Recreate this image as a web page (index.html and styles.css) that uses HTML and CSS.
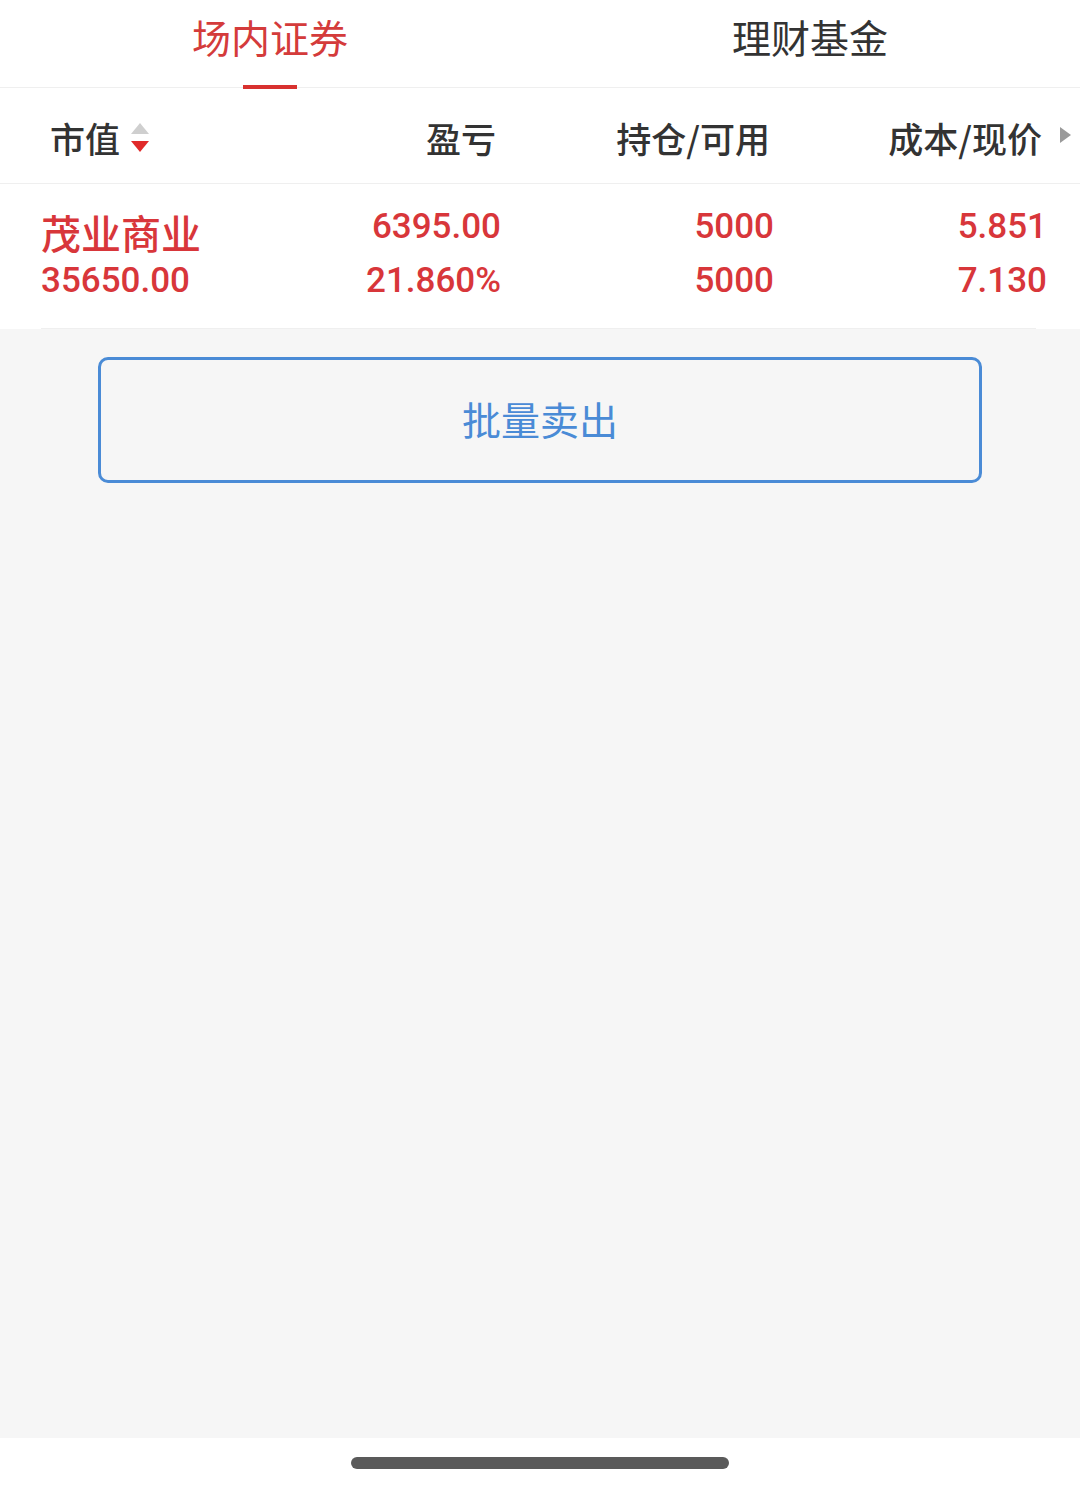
FILE: index.html
```html
<!DOCTYPE html>
<html lang="zh-CN">
<head>
<meta charset="utf-8">
<title>持仓</title>
<link rel="stylesheet" href="styles.css">
</head>
<body>
<div class="page">
  <div class="tabs">
    <div class="tab active"><span class="tab-label">场内证券</span><span class="tab-bar"></span></div>
    <div class="tab"><span class="tab-label">理财基金</span><span class="tab-bar"></span></div>
  </div>

  <div class="grid head">
    <div class="cell c1"><span>市值</span>
      <span class="sort"><span class="tri-up"></span><span class="tri-down"></span></span>
    </div>
    <div class="cell c2">盈亏</div>
    <div class="cell c3">持仓/可用</div>
    <div class="cell c4"><span>成本/现价</span><span class="tri-right"></span></div>
  </div>

  <div class="grid row">
    <div class="cell c1">
      <div class="name">茂业商业</div>
      <div class="num1">35650.00</div>
    </div>
    <div class="cell c2">
      <div class="num">6395.00</div>
      <div class="num">21.860%</div>
    </div>
    <div class="cell c3">
      <div class="num">5000</div>
      <div class="num">5000</div>
    </div>
    <div class="cell c4">
      <div class="num">5.851</div>
      <div class="num">7.130</div>
    </div>
  </div>

  <div class="main">
    <div class="btn">批量卖出</div>
  </div>

  <div class="home"><span class="home-bar"></span></div>
</div>
</body>
</html>
```

FILE: styles.css
```css
html, body {
  margin: 0;
  padding: 0;
}
body {
  background: #f6f6f6;
  font-family: Roboto, "Noto Sans CJK SC", sans-serif;
}
.page {
  width: 1080px;
  height: 1487px;
  display: flex;
  flex-direction: column;
}
.tabs {
  height: 88px;
  flex-shrink: 0;
  background: #fff;
  display: flex;
  border-bottom: 1px solid #efefef;
  box-sizing: border-box;
  position: relative;
  z-index: 2;
}
.tab {
  flex: 1;
  display: flex;
  flex-direction: column;
  align-items: center;
  font-family: "Noto Sans CJK SC", sans-serif;
  font-size: 39px;
  color: #333;
}
.tab-label {
  line-height: 50px;
  margin-top: 11px;
  flex-shrink: 0;
}
.tab-bar {
  flex-shrink: 0;
  margin-top: 24px;
  width: 54px;
  height: 4px;
  background: transparent;
}
.tab.active { color: #d43b3b; }
.tab.active .tab-bar { background: #d8312f; }

.grid {
  display: grid;
  grid-template-columns: 280px 222px 274px 1fr;
  background: #fff;
  border-bottom: 1px solid #efefef;
  box-sizing: border-box;
  flex-shrink: 0;
}
.head {
  height: 96px;
  padding-top: 5px;
  align-items: center;
  font-family: "Noto Sans CJK SC", sans-serif;
  font-size: 35px;
  font-weight: 500;
  color: #333;
}
.head .cell { line-height: 48px; }
.head .c1 {
  padding-left: 50px;
  display: flex;
  align-items: center;
}
.head .c2 { text-align: right; padding-right: 6px; }
.head .c3 { text-align: right; padding-right: 6px; }
.head .c4 {
  display: flex;
  justify-content: flex-end;
  align-items: center;
  padding-right: 9px;
}
.sort {
  display: flex;
  flex-direction: column;
  margin-left: 11px;
  margin-top: -2px;
  gap: 7px;
}
.tri-up {
  width: 0; height: 0;
  border-left: 9.5px solid transparent;
  border-right: 9.5px solid transparent;
  border-bottom: 11px solid #cfcfcf;
}
.tri-down {
  width: 0; height: 0;
  border-left: 9.5px solid transparent;
  border-right: 9.5px solid transparent;
  border-top: 11px solid #e02a2a;
}
.tri-right {
  width: 0; height: 0;
  margin-left: 18px;
  margin-top: -6px;
  border-top: 8.5px solid transparent;
  border-bottom: 8.5px solid transparent;
  border-left: 11px solid #9a9a9a;
}

.row {
  height: 145px;
  align-items: start;
  color: #d8363a;
  font-weight: 500;
  border-bottom: none;
  position: relative;
}
.row::after {
  content: "";
  position: absolute;
  left: 41px;
  right: 44px;
  bottom: 0;
  height: 1px;
  background: #efefef;
}
.row .c1 {
  padding-left: 41px;
  padding-top: 23px;
}
.name {
  font-family: "Noto Sans CJK SC", sans-serif;
  font-size: 40px;
  line-height: 50px;
}
.num1 {
  font-size: 35px;
  line-height: 48px;
}
.num {
  font-size: 35px;
  line-height: 54px;
}
.row .c2, .row .c3, .row .c4 {
  text-align: right;
  padding-top: 16px;
}
.row .c2 { padding-right: 1px; }
.row .c3 { padding-right: 2px; }
.row .c4 { padding-right: 33px; }

.main {
  flex: 1;
  padding-top: 28px;
  display: flex;
  flex-direction: column;
  align-items: center;
}
.btn {
  width: 884px;
  height: 126px;
  box-sizing: border-box;
  border: 3px solid #4a8bd6;
  border-radius: 10px;
  display: flex;
  align-items: center;
  justify-content: center;
  padding-bottom: 5px;
  font-family: "Noto Sans CJK SC", sans-serif;
  font-size: 39px;
  color: #4a8bd6;
}
.home {
  height: 49px;
  flex-shrink: 0;
  background: #fff;
  display: flex;
  justify-content: center;
  padding-top: 19px;
  box-sizing: border-box;
}
.home-bar {
  width: 378px;
  height: 12px;
  border-radius: 6px;
  background: #5a5a5a;
}
```
